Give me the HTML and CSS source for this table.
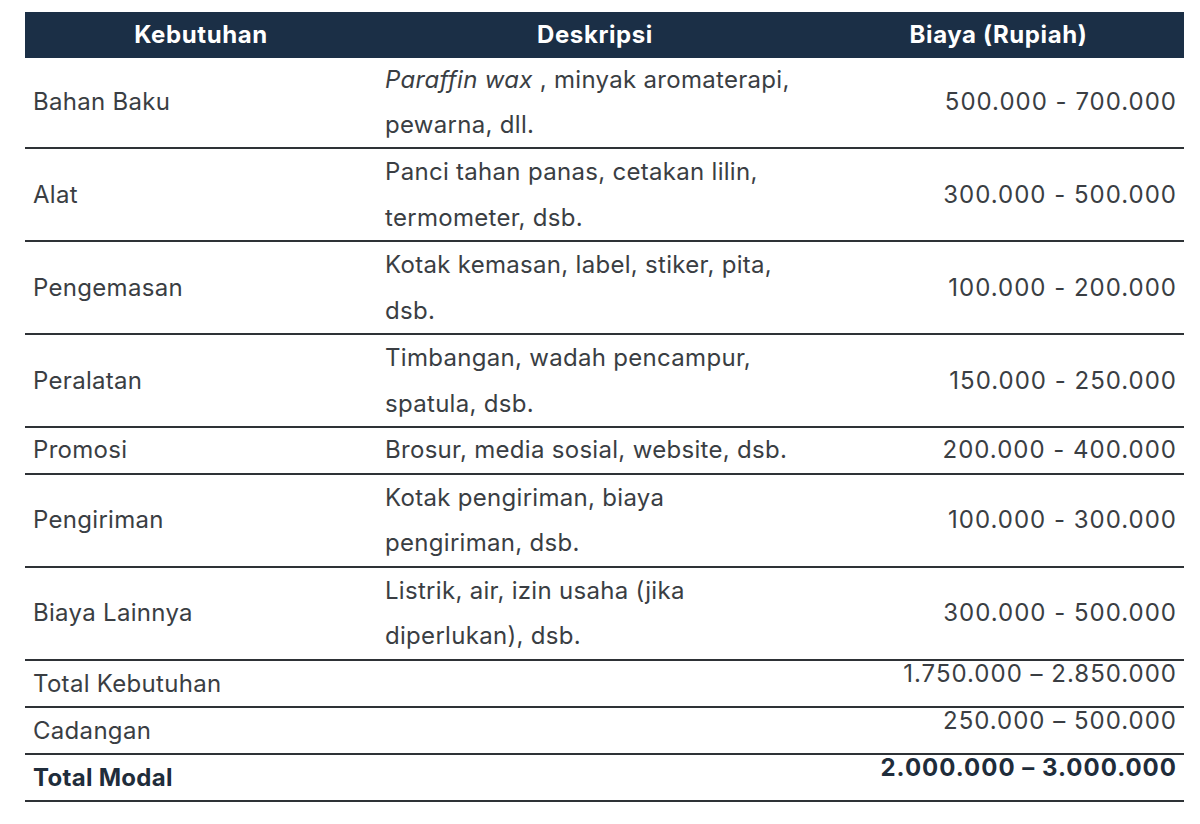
FILE: index.html
```html
<!DOCTYPE html>
<html lang="id">
<head>
<meta charset="utf-8">
<title>Modal Usaha Lilin Aromaterapi</title>
<link rel="stylesheet" href="styles.css">
</head>
<body>
<div class="wrap">
<table class="cost">
  <colgroup>
    <col class="c1"><col class="c2"><col class="c3">
  </colgroup>
  <thead>
    <tr><th>Kebutuhan</th><th>Deskripsi</th><th>Biaya (Rupiah)</th></tr>
  </thead>
  <tbody>
    <tr class="first"><td>Bahan Baku</td><td><em>Paraffin wax</em> , minyak aromaterapi,<br>pewarna, dll.</td><td class="num">500.000 - 700.000</td></tr>
    <tr><td>Alat</td><td>Panci tahan panas, cetakan lilin,<br>termometer, dsb.</td><td class="num">300.000 - 500.000</td></tr>
    <tr><td>Pengemasan</td><td>Kotak kemasan, label, stiker, pita,<br>dsb.</td><td class="num">100.000 - 200.000</td></tr>
    <tr><td>Peralatan</td><td>Timbangan, wadah pencampur,<br>spatula, dsb.</td><td class="num">150.000 - 250.000</td></tr>
    <tr class="single"><td>Promosi</td><td>Brosur, media sosial, website, dsb.</td><td class="num">200.000 - 400.000</td></tr>
    <tr><td>Pengiriman</td><td>Kotak pengiriman, biaya<br>pengiriman, dsb.</td><td class="num">100.000 - 300.000</td></tr>
    <tr><td>Biaya Lainnya</td><td>Listrik, air, izin usaha (jika<br>diperlukan), dsb.</td><td class="num">300.000 - 500.000</td></tr>
    <tr class="single sum"><td>Total Kebutuhan</td><td></td><td class="num top">1.750.000 – 2.850.000</td></tr>
    <tr class="single sum"><td>Cadangan</td><td></td><td class="num top">250.000 – 500.000</td></tr>
    <tr class="single sum grand"><td>Total Modal</td><td></td><td class="num top">2.000.000 – 3.000.000</td></tr>
  </tbody>
</table>
</div>
</body>
</html>
```

FILE: styles.css
```css
html, body {
  margin: 0;
  padding: 0;
  background: #ffffff;
}

.wrap {
  padding: 12px 16px 0 25px;
}

.cost {
  width: 1159px;
  border-collapse: collapse;
  font-family: "Inter", "Open Sans", "Liberation Sans", sans-serif;
  font-size: 24px;
  letter-spacing: 0.3px;
  color: #3a3e43;
}

.c1 { width: 352px; }
.c2 { width: 436px; }
.c3 { width: 371px; }

.cost th {
  background: #1b2f46;
  color: #ffffff;
  font-weight: 700;
  font-size: 24px;
  height: 46px;
  padding: 0 8px;
  text-align: center;
  line-height: 46px;
  letter-spacing: 0.6px;
}

.cost td {
  padding: 0 8px;
  line-height: 45.5px;
  vertical-align: middle;
  border-bottom: 2px solid #2e3236;
  text-align: left;
}

.cost tr.first td {
  line-height: 44.5px;
}

.cost tr.single td {
  line-height: 44.5px;
}

.cost tr.sum td {
  line-height: 45px;
}

.cost td.num {
  text-align: right;
  letter-spacing: 1px;
  padding-right: 7px;
}

.cost tr.single td.top {
  vertical-align: top;
  line-height: 26px;
}

.cost em {
  font-style: italic;
}

.grand td {
  font-weight: 700;
  color: #1f2d3b;
}
```
